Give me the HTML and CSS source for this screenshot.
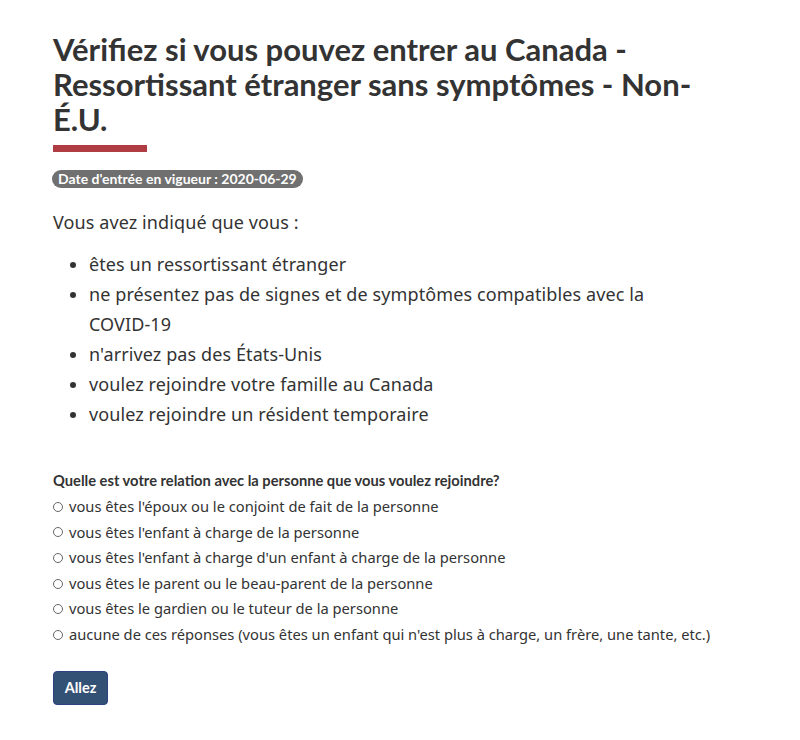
FILE: index.html
```html
<!DOCTYPE html>
<html lang="fr">
<head>
<meta charset="utf-8">
<link rel="stylesheet" href="styles.css">
</head>
<body>
<main class="page">
  <h1 class="title">Vérifiez si vous pouvez entrer au Canada - Ressortissant étranger sans symptômes - Non-<wbr>É.U.</h1>
  <div class="rule"></div>
  <div class="badge">Date d'entrée en vigueur : 2020-06-29</div>
  <p class="intro">Vous avez indiqué que vous :</p>
  <ul class="facts">
    <li>êtes un ressortissant étranger</li>
    <li>ne présentez pas de signes et de symptômes compatibles avec la <span class="nowrap">COVID-19</span></li>
    <li>n'arrivez pas des États-Unis</li>
    <li>voulez rejoindre votre famille au Canada</li>
    <li>voulez rejoindre un résident temporaire</li>
  </ul>
  <form class="question">
    <p class="q-label">Quelle est votre relation avec la personne que vous voulez rejoindre?</p>
    <label class="opt"><span class="radio"></span>vous êtes l'époux ou le conjoint de fait de la personne</label>
    <label class="opt"><span class="radio"></span>vous êtes l'enfant à charge de la personne</label>
    <label class="opt"><span class="radio"></span>vous êtes l'enfant à charge d'un enfant à charge de la personne</label>
    <label class="opt"><span class="radio"></span>vous êtes le parent ou le beau-parent de la personne</label>
    <label class="opt"><span class="radio"></span>vous êtes le gardien ou le tuteur de la personne</label>
    <label class="opt"><span class="radio"></span>aucune de ces réponses (vous êtes un enfant qui n'est plus à charge, un frère, une tante, etc.)</label>
    <button type="button" class="btn">Allez</button>
  </form>
</main>
</body>
</html>
```

FILE: styles.css
```css
html, body {
  margin: 0;
  padding: 0;
  background: #fff;
}
body {
  font-family: "Noto Sans", "Open Sans", sans-serif;
  color: #333;
}
.page {
  padding: 32px 0 0 53px;
  width: 665px;
}
.title {
  font-family: Lato, sans-serif;
  font-weight: 700;
  font-size: 31px;
  line-height: 35px;
  color: #333;
  margin: 0;
}
.rule {
  width: 94px;
  height: 7px;
  background: #af3c43;
  margin-top: 8px;
}
.badge {
  width: fit-content;
  margin-top: 18px;
  margin-left: -1px;
  background: #707070;
  color: #fff;
  font-family: Lato, sans-serif;
  font-weight: 700;
  font-size: 14px;
  line-height: 18px;
  padding: 0 6px;
  border-radius: 9px;
}
.intro {
  margin: 19px 0 0;
  font-size: 18px;
  line-height: 30px;
  letter-spacing: 0.1px;
}
.facts {
  margin: 12px 0 0;
  padding-left: 36px;
  font-size: 18px;
  line-height: 30px;
  letter-spacing: 0.1px;
}
.nowrap {
  white-space: nowrap;
}
.question {
  margin-top: 41px;
}
.q-label {
  font-family: Lato, sans-serif;
  font-weight: 700;
  font-size: 14.7px;
  margin: 0 0 4px;
  line-height: 20px;
  color: #333;
}
.opt {
  display: flex;
  align-items: center;
  font-size: 14.7px;
  line-height: 25.6px;
}
.radio {
  width: 8px;
  height: 8px;
  border: 1px solid #666;
  border-radius: 50%;
  margin-right: 6px;
  flex: none;
}
.btn {
  display: block;
  margin-top: 23px;
  background: #335075;
  color: #fff;
  border: 1px solid #2b4380;
  border-radius: 4px;
  font-family: Lato, sans-serif;
  font-weight: 700;
  font-size: 14.5px;
  width: 55px;
  height: 34px;
  padding: 0;
}
```
